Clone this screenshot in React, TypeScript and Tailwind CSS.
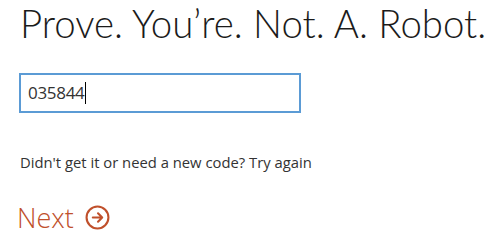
import React from 'react';

export default function App() {
  return (
    <div className="w-[496px] h-[243px] bg-white overflow-hidden" style={{ fontFamily: '"Open Sans", "Noto Sans", sans-serif' }}>
      <div className="pl-[20px] pt-0">
        <h1
          className="text-[38.4px] leading-[46px] font-light text-[#1b1b1b] whitespace-nowrap"
          style={{ fontFamily: 'Lato, "Open Sans", sans-serif' }}
        >
          Prove. You’re. Not. A. Robot.
        </h1>
        <div className="mt-[27px] ml-[-1px] w-[282px] h-[40px] border-2 border-[#5b9bd5] flex items-center pl-[7px]">
          <span className="text-[17px] text-[#333] tracking-[-0.3px]">035844</span>
          <span className="w-px h-[22px] bg-black" />
        </div>
        <p className="mt-[38px] text-[14.8px] text-[#333]">
          Didn't get it or need a new code? Try again
        </p>
        <button className="mt-[31px] ml-[-3px] flex items-center gap-[11px] text-[#c0502b]">
          <span className="text-[27px] font-light leading-none">Next</span>
          <svg width="25" height="25" viewBox="0 0 24 24" fill="none" stroke="currentColor" strokeWidth="2" strokeLinecap="round" strokeLinejoin="round">
            <circle cx="12" cy="12" r="10.5" />
            <path d="M7.5 12h8.5M12.5 8l4 4-4 4" />
          </svg>
        </button>
      </div>
    </div>
  );
}
